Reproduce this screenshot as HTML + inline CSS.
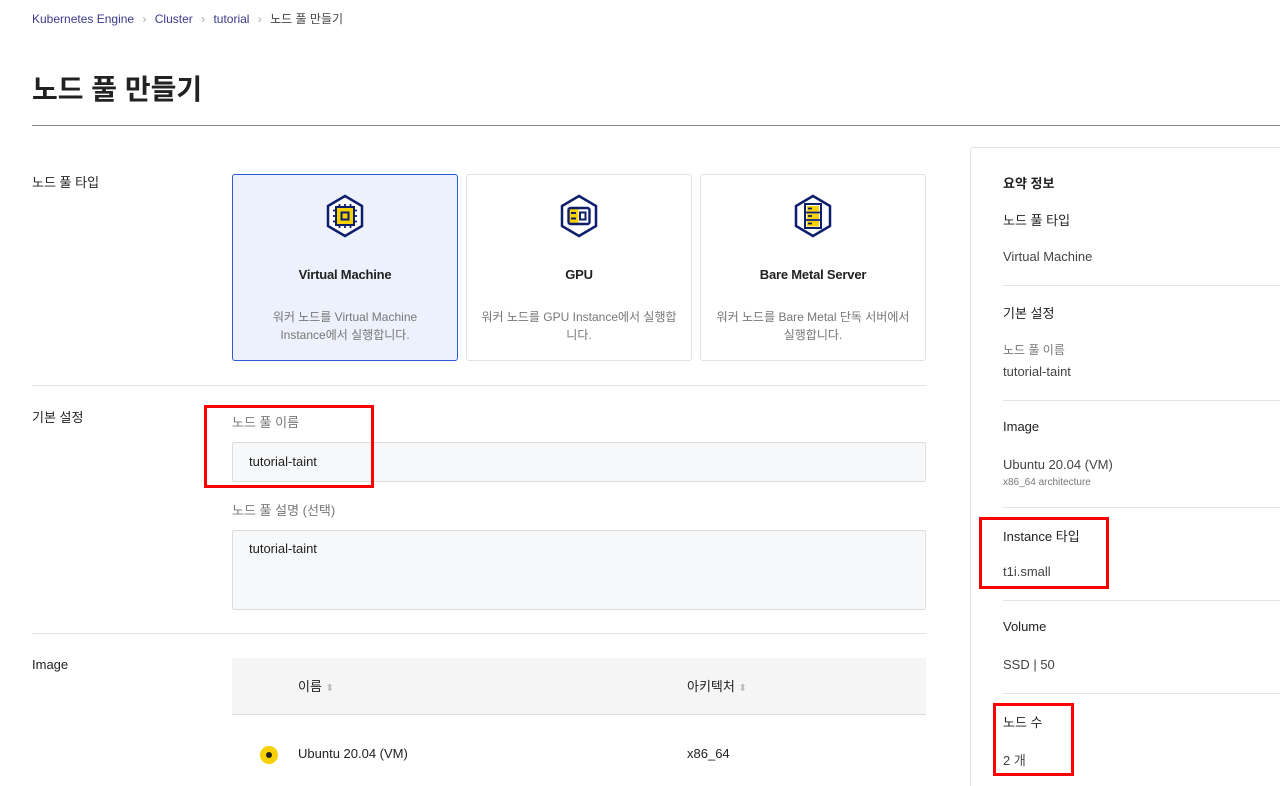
<!DOCTYPE html>
<html><head><meta charset="utf-8"><style>
*{margin:0;padding:0;box-sizing:border-box}
html,body{width:1280px;height:786px;overflow:hidden}
body{background:#fff;font-family:"Liberation Sans","Noto Sans CJK KR",sans-serif;color:#222;position:relative}
.a{position:absolute;white-space:nowrap}
.bc{font-size:12px;color:#3a3a8c;top:10px}
.lbl{font-size:13px;color:#222}
.card{position:absolute;top:174px;width:226px;height:187px;border:1px solid #e2e2e2;border-radius:3px;background:#fff;text-align:center}
.card.sel{background:#edf1fb;border-color:#2a5bd7}
.card svg{position:absolute;left:92px;top:19px}
.card .t{position:absolute;top:92px;left:0;right:0;font-size:13px;font-weight:bold;color:#222;letter-spacing:-0.2px}
.card .d{position:absolute;top:133px;left:10px;right:10px;font-size:12px;color:#777;line-height:18px;white-space:normal}
.card.sel .d{left:22px;right:22px}
.inp{position:absolute;left:232px;width:694px;background:#f7f8fa;border:1px solid #ddd;border-radius:2px;font-size:13px;padding:0 16px}
.hr{position:absolute;height:1px;background:#e4e4e4}
.rp{font-size:13px;left:1003px}
.red{position:absolute;border:3px solid #f00}
</style></head><body>
<div class="a bc" style="left:32px">Kubernetes Engine <span style="color:#aaa;margin:0 5px">›</span> Cluster <span style="color:#aaa;margin:0 5px">›</span> tutorial <span style="color:#aaa;margin:0 5px">›</span> <span style="color:#444">노드 풀 만들기</span></div>
<div class="a" style="left:32px;top:68px;font-size:28px;font-weight:bold;color:#222">노드 풀 만들기</div>
<div class="hr" style="left:32px;top:125px;width:1248px;background:#888"></div>

<div class="a lbl" style="left:32px;top:172px">노드 풀 타입</div>
<div class="card sel" style="left:232px">
<svg width="40" height="44" viewBox="0 0 40 44"><polygon points="20,2 37,12 37,32 20,42 3,32 3,12" fill="#fff" stroke="#0d1f6b" stroke-width="2.5"/><rect x="11" y="13" width="18" height="18" fill="#f7d100" stroke="#0d1f6b" stroke-width="2"/><rect x="16.5" y="18.5" width="7" height="7" fill="none" stroke="#0d1f6b" stroke-width="2"/><path d="M14.5 10v3M20 10v3M25.5 10v3M14.5 31v3M20 31v3M25.5 31v3M8 16.5h3M8 22h3M8 27.5h3M29 16.5h3M29 22h3M29 27.5h3" stroke="#0d1f6b" stroke-width="1.8"/></svg>
<div class="t">Virtual Machine</div><div class="d">워커 노드를 Virtual Machine Instance에서 실행합니다.</div></div>
<div class="card" style="left:466px">
<svg width="40" height="44" viewBox="0 0 40 44"><polygon points="20,2 37,12 37,32 20,42 3,32 3,12" fill="#fff" stroke="#0d1f6b" stroke-width="2.5"/><rect x="9.5" y="14" width="10" height="16" fill="#f7d100"/><rect x="9.5" y="14" width="21" height="16" rx="2" fill="none" stroke="#0d1f6b" stroke-width="2.4"/><rect x="21" y="18.5" width="5.5" height="7" fill="none" stroke="#0d1f6b" stroke-width="2"/><path d="M12 19h5M12 24.5h5" stroke="#0d1f6b" stroke-width="2"/></svg>
<div class="t">GPU</div><div class="d">워커 노드를 GPU Instance에서 실행합니다.</div></div>
<div class="card" style="left:700px">
<svg width="40" height="44" viewBox="0 0 40 44"><polygon points="20,2 37,12 37,32 20,42 3,32 3,12" fill="#fff" stroke="#0d1f6b" stroke-width="2.5"/><rect x="12" y="10" width="16" height="24" fill="#fff" stroke="#0d1f6b" stroke-width="2"/><rect x="14" y="12" width="12" height="5.5" fill="#f7d100"/><rect x="14" y="19.5" width="12" height="5.5" fill="#f7d100"/><rect x="14" y="27" width="12" height="5.5" fill="#f7d100"/><path d="M12 18.5h16M12 26h16M15 14.5h4M15 22h4M15 29.5h4" stroke="#0d1f6b" stroke-width="1.8"/></svg>
<div class="t">Bare Metal Server</div><div class="d">워커 노드를 Bare Metal 단독 서버에서 실행합니다.</div></div>

<div class="hr" style="left:32px;top:385px;width:894px"></div>
<div class="a lbl" style="left:32px;top:407px">기본 설정</div>
<div class="a" style="left:232px;top:412px;font-size:13px;color:#777">노드 풀 이름</div>
<div class="inp" style="top:442px;height:40px;line-height:38px">tutorial-taint</div>
<div class="a" style="left:232px;top:500px;font-size:13px;color:#777">노드 풀 설명 (선택)</div>
<div class="inp" style="top:530px;height:80px;padding-top:10px">tutorial-taint</div>
<div class="hr" style="left:32px;top:633px;width:894px"></div>
<div class="a lbl" style="left:32px;top:657px">Image</div>
<div class="a" style="left:232px;top:658px;width:694px;height:57px;background:#f5f5f5;border-bottom:1px solid #ddd"></div>
<div class="a" style="left:298px;top:676px;font-size:13px">이름 <span style="color:#bbb;font-size:10px">⬍</span></div>
<div class="a" style="left:687px;top:676px;font-size:13px">아키텍처 <span style="color:#bbb;font-size:10px">⬍</span></div>
<div class="a" style="left:260px;top:746px;width:18px;height:18px;border-radius:50%;background:#f7d100"></div>
<div class="a" style="left:266px;top:752px;width:6px;height:6px;border-radius:50%;background:#222"></div>
<div class="a" style="left:298px;top:746px;font-size:13px">Ubuntu 20.04 (VM)</div>
<div class="a" style="left:687px;top:746px;font-size:13px">x86_64</div>

<div class="a" style="left:970px;top:147px;width:310px;height:639px;border:1px solid #e2e2e2;border-bottom:none;border-right:none;border-radius:3px 0 0 0"></div>
<div class="a rp" style="top:173px;font-weight:bold">요약 정보</div>
<div class="a rp" style="top:210px">노드 풀 타입</div>
<div class="a rp" style="top:249px;color:#444">Virtual Machine</div>
<div class="hr" style="left:1003px;top:285px;width:277px"></div>
<div class="a rp" style="top:303px">기본 설정</div>
<div class="a rp" style="top:341px;font-size:12px;color:#777">노드 풀 이름</div>
<div class="a rp" style="top:364px;color:#444">tutorial-taint</div>
<div class="hr" style="left:1003px;top:400px;width:277px"></div>
<div class="a rp" style="top:419px">Image</div>
<div class="a rp" style="top:457px;color:#444">Ubuntu 20.04 (VM)</div>
<div class="a rp" style="top:477px;font-size:10px;color:#777">x86_64 architecture</div>
<div class="hr" style="left:1003px;top:507px;width:277px"></div>
<div class="a rp" style="top:526px">Instance 타입</div>
<div class="a rp" style="top:564px;color:#444">t1i.small</div>
<div class="hr" style="left:1003px;top:600px;width:277px"></div>
<div class="a rp" style="top:619px">Volume</div>
<div class="a rp" style="top:657px;color:#444">SSD | 50</div>
<div class="hr" style="left:1003px;top:693px;width:277px"></div>
<div class="a rp" style="top:712px">노드 수</div>
<div class="a rp" style="top:750px;color:#444">2 개</div>

<div class="red" style="left:204px;top:405px;width:170px;height:83px"></div>
<div class="red" style="left:979px;top:517px;width:130px;height:72px"></div>
<div class="red" style="left:993px;top:703px;width:81px;height:73px"></div>
</body></html>
